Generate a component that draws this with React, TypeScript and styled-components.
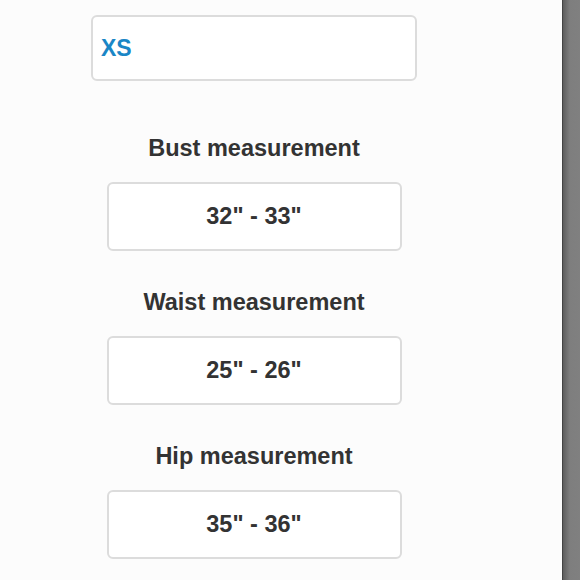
import React from 'react';
import styled, { createGlobalStyle } from 'styled-components';

const GlobalStyle = createGlobalStyle`
    html, body {
        margin: 0;
        padding: 0;
        background: #fcfcfc;
    }
    body {
        font-family: 'Liberation Sans', Arial, sans-serif;
    }
`;

const measurements = [
    { label: 'Bust measurement', value: '32" - 33"' },
    { label: 'Waist measurement', value: '25" - 26"' },
    { label: 'Hip measurement', value: '35" - 36"' },
];

function App() {
    return (
        <>
            <GlobalStyle />
            <Screen>
                <Content>
                    <Column>
                        <SizeBox>XS</SizeBox>
                        {measurements.map((m, i) => (
                            <Group key={m.label} first={i === 0}>
                                <Label>{m.label}</Label>
                                <ValueBox>{m.value}</ValueBox>
                            </Group>
                        ))}
                    </Column>
                </Content>
                <SideBar />
            </Screen>
        </>
    );
}

export default App;

const Screen = styled.div`
    display: flex;
    width: 580px;
    height: 580px;
    overflow: hidden;
`;

const Content = styled.div`
    flex: 1;
    background: #fcfcfc;
    padding-top: 15px;
    padding-left: 91px;
`;

const Column = styled.div`
    width: 326px;
    display: flex;
    flex-direction: column;
    align-items: center;
`;

const SizeBox = styled.div`
    box-sizing: border-box;
    width: 326px;
    height: 66px;
    border: 2px solid #dcdcdc;
    border-radius: 6px;
    background: #fff;
    display: flex;
    align-items: center;
    padding-left: 8px;
    font-size: 23px;
    font-weight: bold;
    color: #1a86c6;
`;

const Group = styled.div<{ first: boolean }>`
    display: flex;
    flex-direction: column;
    align-items: center;
    margin-top: ${(p) => (p.first ? '54px' : '38px')};
`;

const Label = styled.div`
    font-size: 23.5px;
    line-height: 26px;
    font-weight: bold;
    color: #333;
    margin-bottom: 21px;
`;

const ValueBox = styled.div`
    box-sizing: border-box;
    width: 295px;
    height: 69px;
    border: 2px solid #dcdcdc;
    border-radius: 6px;
    background: #fff;
    display: flex;
    align-items: center;
    justify-content: center;
    font-size: 23.5px;
    font-weight: bold;
    color: #333;
`;

const SideBar = styled.div`
    width: 17px;
    height: 100%;
    border-left: 1px solid #444;
    background: linear-gradient(to right, #5e5e5e, #7e7e7e 40%, #808080);
`;
